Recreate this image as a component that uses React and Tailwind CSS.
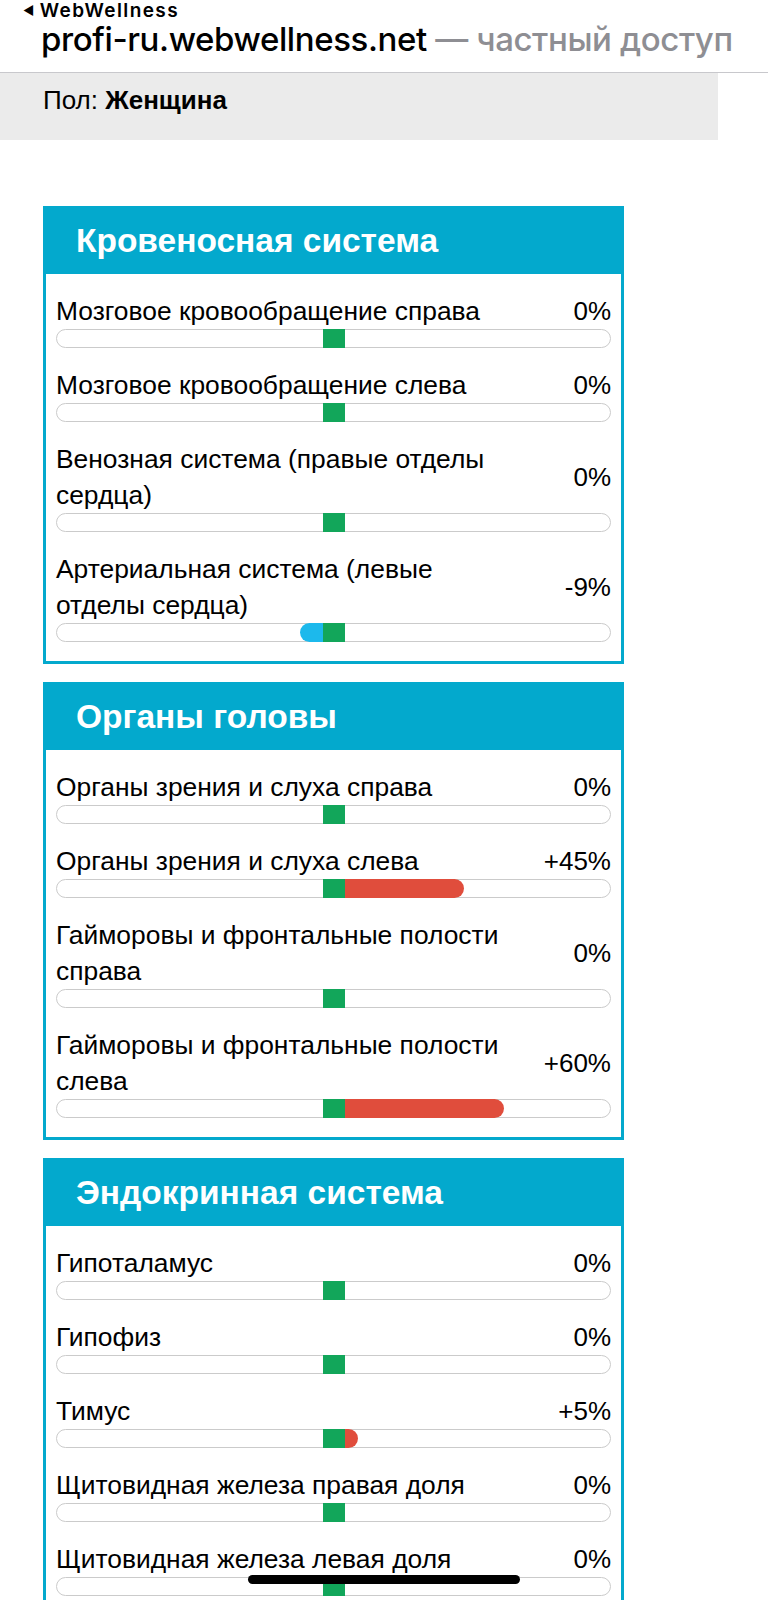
import React from "react";

const sections = [
  {
    title: "Кровеносная система",
    rows: [
      ["Мозговое кровообращение справа", 0],
      ["Мозговое кровообращение слева", 0],
      ["Венозная система (правые отделы сердца)", 0],
      ["Артериальная система (левые отделы сердца)", -9],
    ],
  },
  {
    title: "Органы головы",
    rows: [
      ["Органы зрения и слуха справа", 0],
      ["Органы зрения и слуха слева", 45],
      ["Гайморовы и фронтальные полости справа", 0],
      ["Гайморовы и фронтальные полости слева", 60],
    ],
  },
  {
    title: "Эндокринная система",
    rows: [
      ["Гипоталамус", 0],
      ["Гипофиз", 0],
      ["Тимус", 5],
      ["Щитовидная железа правая доля", 0],
      ["Щитовидная железа левая доля", 0],
    ],
  },
];

function fmt(v) {
  if (v > 0) return `+${v}%`;
  return `${v}%`;
}

function Bar({ value }) {
  const w = Math.abs(value) * 2.66;
  return (
    <div className="relative h-[19px] rounded-full border border-[#cbcbcb] bg-white">
      {value < 0 && (
        <div
          className="absolute top-[-1px] bottom-[-1px] rounded-l-full bg-[#1cb9ec]"
          style={{ left: 266 - w + 0.5, width: w }}
        />
      )}
      <div className="absolute top-[-1px] bottom-[-1px] left-[266px] w-[22px] bg-[#12a65a]" />
      {value > 0 && (
        <div
          className="absolute top-[-1px] bottom-[-1px] rounded-r-full bg-[#e04d3c]"
          style={{ left: 287.5, width: w }}
        />
      )}
    </div>
  );
}

function Row({ label, value }) {
  return (
    <div className="flex flex-col">
      <div className="flex items-center">
        <div className="w-[452px] shrink-0 text-[26.4px] leading-[36px] text-black">{label}</div>
        <div className="flex-1 text-right text-[26px] leading-[36px] text-black whitespace-nowrap">{fmt(value)}</div>
      </div>
      <Bar value={value} />
    </div>
  );
}

function Card({ title, rows }) {
  return (
    <div className="w-[581px] border-[3px] border-[#03a9cd] bg-white">
      <div className="flex h-[65px] items-center bg-[#03a9cd] pl-[30px] text-[33.5px] font-bold text-white">
        {title}
      </div>
      <div className="flex flex-col gap-[19px] px-[10px] py-[19px]">
        {rows.map(([l, v]) => (
          <Row key={l} label={l} value={v} />
        ))}
      </div>
    </div>
  );
}

export default function App() {
  return (
    <div className="relative h-[1600px] w-[768px] overflow-hidden bg-white" style={{ fontFamily: '"Liberation Sans", Arial, sans-serif' }}>
      <div className="h-[73px] border-b border-[#c8c8cc] pl-[23px]" style={{ fontFamily: 'Inter, "Liberation Sans", sans-serif' }}>
        <div className="flex h-[21px] items-center gap-[4px] text-[19px] font-semibold leading-none tracking-[1.4px] text-black">
          <span className="text-[12px]">◀</span>
          <span>WebWellness</span>
        </div>
        <div className="pl-[18px] text-[33px] font-medium leading-[36px] tracking-[-0.4px] whitespace-nowrap">
          <span className="text-black">profi-ru.webwellness.net</span>
          <span className="text-[#8e8e93]"> — частный доступ</span>
        </div>
      </div>
      <div className="h-[67px] w-[718px] bg-[#ebebeb] pl-[43px] pt-[11px] text-[26px] leading-[32px] text-black">
        Пол: <span className="font-bold">Женщина</span>
      </div>
      <div className="flex flex-col gap-[18px] pl-[43px] pt-[66px]">
        {sections.map((s) => (
          <Card key={s.title} title={s.title} rows={s.rows} />
        ))}
      </div>
      <div className="absolute left-[248px] top-[1575px] h-[9px] w-[272px] rounded-full bg-black" />
    </div>
  );
}
